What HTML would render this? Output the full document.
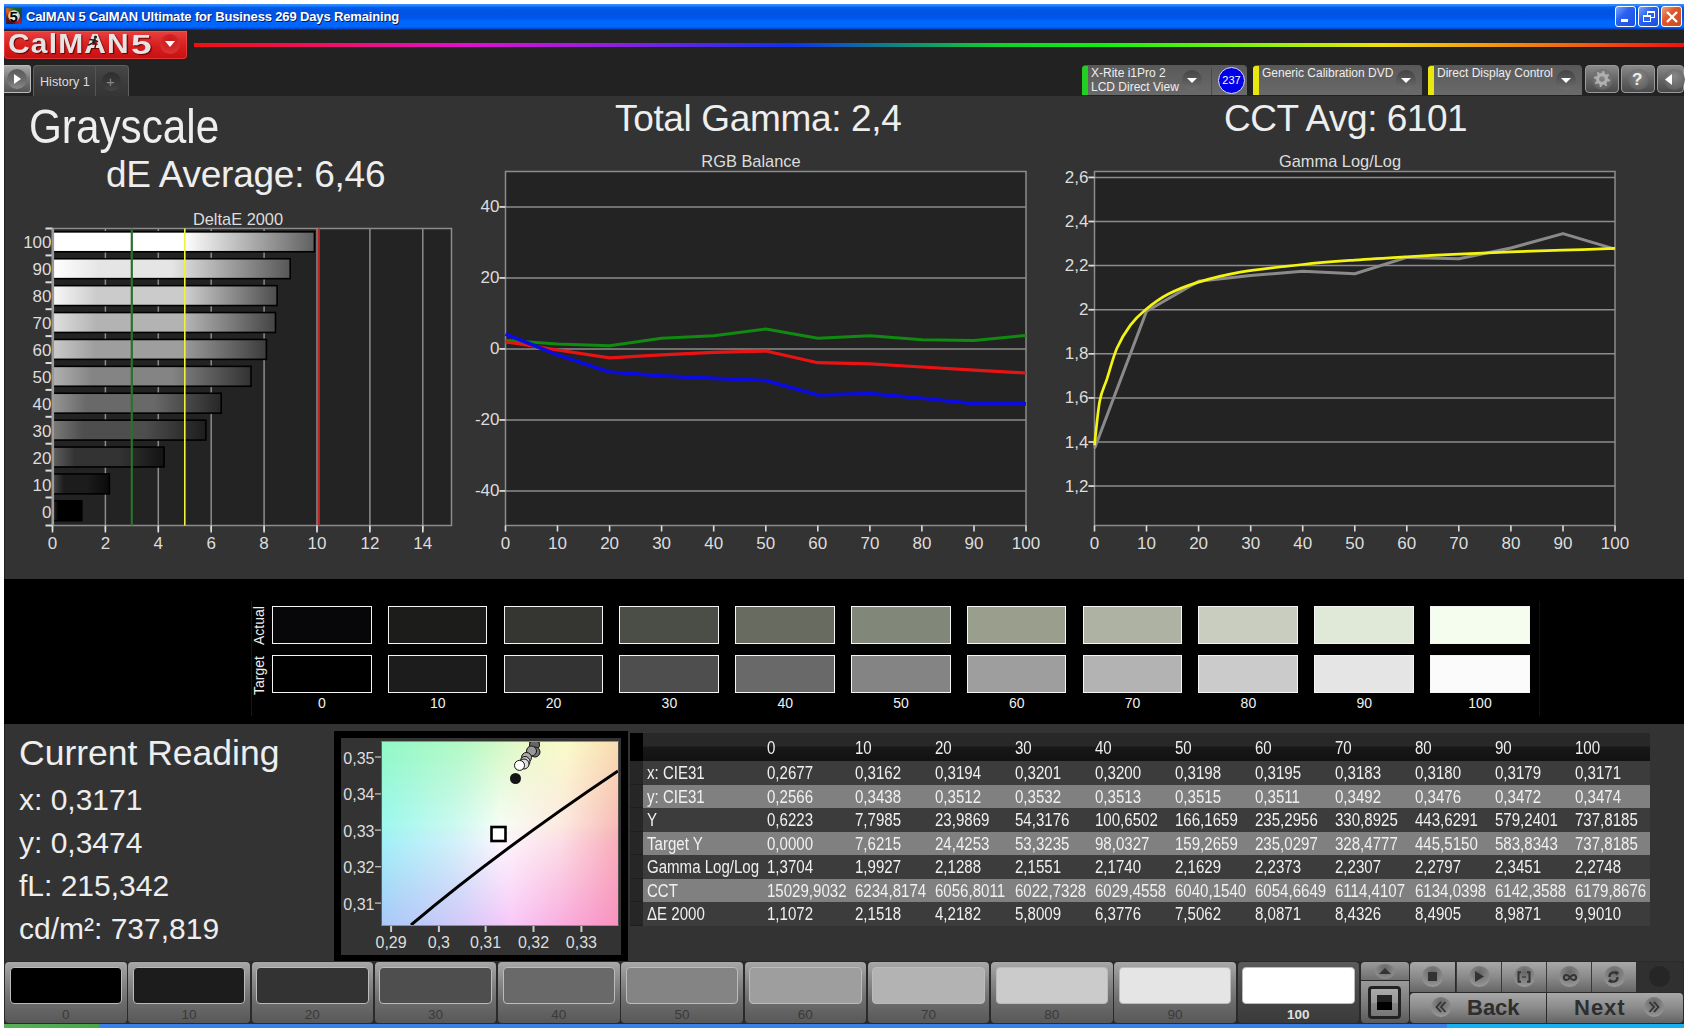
<!DOCTYPE html>
<html><head><meta charset="utf-8">
<style>
*{margin:0;padding:0;box-sizing:border-box}
html,body{width:1688px;height:1028px;overflow:hidden;background:#fff;font-family:"Liberation Sans", sans-serif}
.a{position:absolute}
.t{position:absolute;white-space:nowrap;line-height:1}
</style></head><body>

<div class="a" style="left:4px;top:4px;width:1680px;height:1020px;background:#222"></div>
<div class="a" style="left:4px;top:4px;width:1680px;height:26px;background:linear-gradient(#3a8af0 0px,#2a88ff 1.5px,#0062f2 3px,#0055e2 6px,#0052e4 10px,#0058f0 14px,#0068ff 18px,#0066fc 23px,#0048d8 24.5px,#182a50 26px)"></div>
<div class="a" style="left:5px;top:96px;width:1679px;height:483px;background:#333"></div>
<div class="a" style="left:4px;top:579px;width:1680px;height:145px;background:#000"></div>
<div class="a" style="left:5px;top:724px;width:1679px;height:238px;background:#333"></div>
<div class="a" style="left:4px;top:1024px;width:1680px;height:4px;background:linear-gradient(90deg,#5ab05a 0,#4aa54a 95px,#3a80e6 95px,#3a80e6 1443px,#18b0f0 1443px,#18b0f0 1680px)"></div>
<div class="a" style="left:6px;top:8px;width:16px;height:16px;background:conic-gradient(from 0deg,#1a6a1a,#2a3a2a 25%,#c01830 40%,#401010 55%,#602010 70%,#e06020 85%,#1a6a1a)"></div>
<div class="a" style="left:8px;top:10px;width:12px;height:12px;border-radius:50%;background:radial-gradient(#f0f0e0 40%,rgba(240,240,220,.6) 70%,transparent 72%)"></div>
<div class="t" style="left:9.5px;top:8.5px;font:bold 15px/16px 'Liberation Sans',sans-serif;color:#000">5</div>
<div class="t" style="left:26px;top:10px;font:bold 13px/14px 'Liberation Sans',sans-serif;color:#fff;text-shadow:1px 1px 0 #0a1a60;letter-spacing:-0.15px">CalMAN 5 CalMAN Ultimate for Business 269 Days Remaining</div>
<div style="position:absolute;top:6px;width:21px;height:21px;border:1px solid #fff;border-radius:3px;left:1615px;background:linear-gradient(135deg,#7aa4ff,#2a62f0 40%,#1d4fe0)"><div class="a" style="left:5px;top:12px;width:7px;height:3px;background:#fff"></div></div>
<div style="position:absolute;top:6px;width:21px;height:21px;border:1px solid #fff;border-radius:3px;left:1638px;background:linear-gradient(135deg,#7aa4ff,#2a62f0 40%,#1d4fe0)"><div class="a" style="left:8px;top:4px;width:8px;height:7px;border:1.5px solid #fff;border-top-width:2.5px"></div><div class="a" style="left:4px;top:8px;width:8px;height:7px;border:1.5px solid #fff;border-top-width:2.5px;background:#2a62f0"></div></div>
<div style="position:absolute;top:6px;width:21px;height:21px;border:1px solid #fff;border-radius:3px;left:1661px;background:linear-gradient(135deg,#f0a080,#e0582a 40%,#c84a20)"><svg class="a" style="left:3px;top:3px" width="14" height="14"><path d="M2 2L12 12M12 2L2 12" stroke="#fff" stroke-width="2.4"/></svg></div>
<div class="a" style="left:4px;top:31px;width:183px;height:28px;border-radius:0 0 4px 4px;background:linear-gradient(#e84040,#d82020 50%,#c81010);box-shadow:inset 0 0 0 1px rgba(255,120,120,.35)"></div>
<div class="t" style="left:8px;top:29px;font:bold 28px/30px 'Liberation Sans',sans-serif;color:#e4e4e4;text-shadow:1px 1px 1px #600;letter-spacing:1.1px;transform:scaleX(1.07);transform-origin:0 0">CalMAN</div>
<div class="t" style="left:131px;top:28.5px;font:bold 28.5px/30px 'Liberation Sans',sans-serif;color:#e4e4e4;text-shadow:1px 1px 1px #600;transform:scaleX(1.3);transform-origin:0 0">5</div>
<svg class="a" style="left:86px;top:35px" width="14" height="13"><circle cx="9.5" cy="2" r="1.6" fill="#222"/><path d="M8.5 4L6 8.5L2.5 10M7.5 6.5L10 9L9 12.5M7.5 5L11.5 6.5M7 5L4 4.5" fill="none" stroke="#222" stroke-width="1.5" stroke-linecap="round"/></svg>
<div class="a" style="left:160px;top:34px;width:20px;height:20px;border-radius:50%;background:radial-gradient(circle at 50% 30%,#c81818,#d83030 70%,#e04040)"></div>
<svg class="a" style="left:163px;top:40px" width="14" height="8"><path d="M2 1L12 1L7 7Z" fill="#fff"/></svg>
<div class="a" style="left:194px;top:43px;width:1490px;height:4px;background:linear-gradient(90deg,#f01010 0%,#f01060 8.5%,#e010d0 18.5%,#9020e0 28%,#1030f0 40%,#107890 46%,#10d030 54%,#10f010 61%,#a0f010 73%,#f0e010 79.6%,#f0a010 86.3%,#f06010 93%,#f01010 100%)"></div>
<div class="a" style="left:4px;top:65px;width:27px;height:28px;border-radius:0 3px 3px 0;border:1px solid #bbb;border-left:none;background:linear-gradient(#aaa,#777 50%,#555)"></div>
<div class="a" style="left:7px;top:69px;width:20px;height:20px;border-radius:50%;background:linear-gradient(#5a5a5a,#6e6e6e 60%,#8a8a8a)"></div>
<svg class="a" style="left:13px;top:73px" width="9" height="12"><path d="M1 1L8 6L1 11Z" fill="#fff"/></svg>
<div class="a" style="left:33px;top:65px;width:96px;height:31px;border-radius:4px 4px 0 0;border:1px solid #5e5e5e;border-bottom:none;background:linear-gradient(#474747,#3a3a3a 60%,#353535)"></div>
<div class="a" style="left:95px;top:66px;width:1px;height:30px;background:#555"></div>
<div class="t" style="left:40px;top:75px;font:12.6px/14px 'Liberation Sans',sans-serif;color:#ddd">History 1</div>
<div class="a" style="left:102px;top:72px;width:19px;height:19px;border-radius:50%;background:linear-gradient(#2e2e2e,#3a3a3a 70%,#454545)"></div>
<div class="t" style="left:106px;top:73px;font:15px/17px 'Liberation Sans',sans-serif;color:#8a8a8a">+</div>
<div class="a" style="left:1082px;top:65px;width:165px;height:30px;border-radius:4px 4px 0 0;background:linear-gradient(#595959,#6a6a6a)"></div><div class="a" style="left:1082px;top:66px;width:6px;height:29px;border-radius:3px 0 0 0;background:#22d022"></div><div class="t" style="left:1091px;top:67px;font:12px/13px 'Liberation Sans',sans-serif;color:#eee">X-Rite i1Pro 2</div><div class="t" style="left:1091px;top:81px;font:12px/13px 'Liberation Sans',sans-serif;color:#eee">LCD Direct View</div><div class="a" style="left:1182px;top:70px;width:20px;height:20px;border-radius:50%;background:linear-gradient(#444,#5a5a5a 55%,#6e6e6e)"></div><svg class="a" style="left:1186px;top:77px" width="12" height="7"><path d="M1 1L11 1L6 6Z" fill="#fff"/></svg>
<div class="a" style="left:1211px;top:68px;width:1px;height:27px;background:#4a4a4a"></div>
<div class="a" style="left:1218px;top:67px;width:27px;height:27px;border-radius:50%;background:#0000e8;border:1px solid #ddf"></div>
<div class="t" style="left:1218px;top:75px;width:27px;text-align:center;font:11px/11px 'Liberation Sans',sans-serif;color:#fff">237</div>
<div class="a" style="left:1253px;top:65px;width:169px;height:30px;border-radius:4px 4px 0 0;background:linear-gradient(#595959,#6a6a6a)"></div><div class="a" style="left:1253px;top:66px;width:6px;height:29px;border-radius:3px 0 0 0;background:#e8e810"></div><div class="t" style="left:1262px;top:67px;font:12px/13px 'Liberation Sans',sans-serif;color:#eee">Generic Calibration DVD</div><div class="a" style="left:1396px;top:70px;width:20px;height:20px;border-radius:50%;background:linear-gradient(#444,#5a5a5a 55%,#6e6e6e)"></div><svg class="a" style="left:1400px;top:77px" width="12" height="7"><path d="M1 1L11 1L6 6Z" fill="#fff"/></svg>
<div class="a" style="left:1428px;top:65px;width:154px;height:30px;border-radius:4px 4px 0 0;background:linear-gradient(#595959,#6a6a6a)"></div><div class="a" style="left:1428px;top:66px;width:6px;height:29px;border-radius:3px 0 0 0;background:#e8e810"></div><div class="t" style="left:1437px;top:67px;font:12px/13px 'Liberation Sans',sans-serif;color:#eee">Direct Display Control</div><div class="a" style="left:1556px;top:70px;width:20px;height:20px;border-radius:50%;background:linear-gradient(#444,#5a5a5a 55%,#6e6e6e)"></div><svg class="a" style="left:1560px;top:77px" width="12" height="7"><path d="M1 1L11 1L6 6Z" fill="#fff"/></svg>
<div class="a" style="left:1585px;top:65px;width:34px;height:28px;border-radius:4px;border:1px solid #9a9a9a;background:linear-gradient(#8a8a8a,#666 50%,#4a4a4a)"></div>
<div class="a" style="left:1592px;top:69px;width:21px;height:21px;border-radius:50%;background:radial-gradient(circle at 50% 35%,#888,#555)"></div>
<div class="a" style="left:1621px;top:65px;width:34px;height:28px;border-radius:4px;border:1px solid #9a9a9a;background:linear-gradient(#8a8a8a,#666 50%,#4a4a4a)"></div>
<div class="a" style="left:1628px;top:69px;width:21px;height:21px;border-radius:50%;background:radial-gradient(circle at 50% 35%,#888,#555)"></div>
<div class="a" style="left:1657px;top:65px;width:27px;height:28px;border-radius:4px;border:1px solid #9a9a9a;background:linear-gradient(#8a8a8a,#666 50%,#4a4a4a)"></div>
<div class="a" style="left:1664px;top:69px;width:21px;height:21px;border-radius:50%;background:radial-gradient(circle at 50% 35%,#888,#555)"></div>
<svg class="a" style="left:1592px;top:69px" width="20" height="20"><path d="M16.00,10.00 L18.16,10.77 L17.84,12.41 L15.54,12.30 L14.24,14.24 L15.23,16.32 L13.84,17.25 L12.30,15.54 L10.00,16.00 L9.23,18.16 L7.59,17.84 L7.70,15.54 L5.76,14.24 L3.68,15.23 L2.75,13.84 L4.46,12.30 L4.00,10.00 L1.84,9.23 L2.16,7.59 L4.46,7.70 L5.76,5.76 L4.77,3.68 L6.16,2.75 L7.70,4.46 L10.00,4.00 L10.77,1.84 L12.41,2.16 L12.30,4.46 L14.24,5.76 L16.32,4.77 L17.25,6.16 L15.54,7.70Z M12.8,10 A2.8,2.8 0 1,0 7.2,10 A2.8,2.8 0 1,0 12.8,10Z" fill="#b0b0b0" fill-rule="evenodd"/></svg>
<div class="t" style="left:1632px;top:71px;font:bold 17px/17px 'Liberation Sans',sans-serif;color:#eee">?</div>
<svg class="a" style="left:1664px;top:73px" width="10" height="13"><path d="M8 1L1 6.5L8 12Z" fill="#fff"/></svg>
<svg class="a" style="left:0;top:0;font-family:'Liberation Sans',sans-serif" width="1688" height="580">
<defs><linearGradient id="bg10" x1="0" x2="1" y1="0" y2="0"><stop offset="0" stop-color="#ffffff"/><stop offset="0.2" stop-color="#ffffff"/><stop offset="0.5" stop-color="#ffffff"/><stop offset="1" stop-color="#606060"/></linearGradient><linearGradient id="bg9" x1="0" x2="1" y1="0" y2="0"><stop offset="0" stop-color="#ffffff"/><stop offset="0.2" stop-color="#e5e5e5"/><stop offset="0.5" stop-color="#e5e5e5"/><stop offset="1" stop-color="#575757"/></linearGradient><linearGradient id="bg8" x1="0" x2="1" y1="0" y2="0"><stop offset="0" stop-color="#f8f8f8"/><stop offset="0.2" stop-color="#cbcbcb"/><stop offset="0.6" stop-color="#cbcbcb"/><stop offset="1" stop-color="#4d4d4d"/></linearGradient><linearGradient id="bg7" x1="0" x2="1" y1="0" y2="0"><stop offset="0" stop-color="#e0e0e0"/><stop offset="0.2" stop-color="#b3b3b3"/><stop offset="0.6" stop-color="#b3b3b3"/><stop offset="1" stop-color="#444444"/></linearGradient><linearGradient id="bg6" x1="0" x2="1" y1="0" y2="0"><stop offset="0" stop-color="#cbcbcb"/><stop offset="0.2" stop-color="#9e9e9e"/><stop offset="0.6" stop-color="#9e9e9e"/><stop offset="1" stop-color="#3c3c3c"/></linearGradient><linearGradient id="bg5" x1="0" x2="1" y1="0" y2="0"><stop offset="0" stop-color="#b1b1b1"/><stop offset="0.2" stop-color="#848484"/><stop offset="0.6" stop-color="#848484"/><stop offset="1" stop-color="#323232"/></linearGradient><linearGradient id="bg4" x1="0" x2="1" y1="0" y2="0"><stop offset="0" stop-color="#969696"/><stop offset="0.2" stop-color="#696969"/><stop offset="0.6" stop-color="#696969"/><stop offset="1" stop-color="#272727"/></linearGradient><linearGradient id="bg3" x1="0" x2="1" y1="0" y2="0"><stop offset="0" stop-color="#7b7b7b"/><stop offset="0.2" stop-color="#4e4e4e"/><stop offset="0.6" stop-color="#4e4e4e"/><stop offset="1" stop-color="#1d1d1d"/></linearGradient><linearGradient id="bg2" x1="0" x2="1" y1="0" y2="0"><stop offset="0" stop-color="#606060"/><stop offset="0.2" stop-color="#333333"/><stop offset="0.6" stop-color="#333333"/><stop offset="1" stop-color="#131313"/></linearGradient><linearGradient id="bg1" x1="0" x2="1" y1="0" y2="0"><stop offset="0" stop-color="#494949"/><stop offset="0.2" stop-color="#1c1c1c"/><stop offset="0.6" stop-color="#1c1c1c"/><stop offset="1" stop-color="#0a0a0a"/></linearGradient><linearGradient id="bg0" x1="0" x2="1" y1="0" y2="0"><stop offset="0" stop-color="#2d2d2d"/><stop offset="0.2" stop-color="#000000"/><stop offset="0.6" stop-color="#000000"/><stop offset="1" stop-color="#000000"/></linearGradient></defs><rect x="52.5" y="228.5" width="399.0" height="297.0" fill="#232323" stroke="#8c8c8c" stroke-width="1.5"/><line x1="105.4" y1="228.5" x2="105.4" y2="530.5" stroke="#8c8c8c" stroke-width="1.5"/><line x1="158.3" y1="228.5" x2="158.3" y2="530.5" stroke="#8c8c8c" stroke-width="1.5"/><line x1="211.2" y1="228.5" x2="211.2" y2="530.5" stroke="#8c8c8c" stroke-width="1.5"/><line x1="264.1" y1="228.5" x2="264.1" y2="530.5" stroke="#8c8c8c" stroke-width="1.5"/><line x1="317.0" y1="228.5" x2="317.0" y2="530.5" stroke="#8c8c8c" stroke-width="1.5"/><line x1="369.9" y1="228.5" x2="369.9" y2="530.5" stroke="#8c8c8c" stroke-width="1.5"/><line x1="422.8" y1="228.5" x2="422.8" y2="530.5" stroke="#8c8c8c" stroke-width="1.5"/><line x1="52.5" y1="525.5" x2="52.5" y2="530.5" stroke="#8c8c8c" stroke-width="1.5"/><rect x="52.5" y="231.85" width="261.9" height="19.9" fill="url(#bg10)" stroke="#000" stroke-width="1.6"/><line x1="45.5" y1="228.5" x2="52.5" y2="228.5" stroke="#ddd" stroke-width="2"/><text x="51.5" y="248.4" font-size="17" fill="#ddd" text-anchor="end" >100</text><rect x="52.5" y="258.75" width="237.7" height="19.9" fill="url(#bg9)" stroke="#000" stroke-width="1.6"/><line x1="45.5" y1="255.4" x2="52.5" y2="255.4" stroke="#ddd" stroke-width="2"/><text x="51.5" y="275.4" font-size="17" fill="#ddd" text-anchor="end" >90</text><rect x="52.5" y="285.65" width="224.6" height="19.9" fill="url(#bg8)" stroke="#000" stroke-width="1.6"/><line x1="45.5" y1="282.3" x2="52.5" y2="282.3" stroke="#ddd" stroke-width="2"/><text x="51.5" y="302.2" font-size="17" fill="#ddd" text-anchor="end" >80</text><rect x="52.5" y="312.55" width="223.0" height="19.9" fill="url(#bg7)" stroke="#000" stroke-width="1.6"/><line x1="45.5" y1="309.2" x2="52.5" y2="309.2" stroke="#ddd" stroke-width="2"/><text x="51.5" y="329.1" font-size="17" fill="#ddd" text-anchor="end" >70</text><rect x="52.5" y="339.45" width="213.9" height="19.9" fill="url(#bg6)" stroke="#000" stroke-width="1.6"/><line x1="45.5" y1="336.1" x2="52.5" y2="336.1" stroke="#ddd" stroke-width="2"/><text x="51.5" y="356.1" font-size="17" fill="#ddd" text-anchor="end" >60</text><rect x="52.5" y="366.35" width="198.5" height="19.9" fill="url(#bg5)" stroke="#000" stroke-width="1.6"/><line x1="45.5" y1="363.0" x2="52.5" y2="363.0" stroke="#ddd" stroke-width="2"/><text x="51.5" y="382.9" font-size="17" fill="#ddd" text-anchor="end" >50</text><rect x="52.5" y="393.25" width="168.7" height="19.9" fill="url(#bg4)" stroke="#000" stroke-width="1.6"/><line x1="45.5" y1="389.9" x2="52.5" y2="389.9" stroke="#ddd" stroke-width="2"/><text x="51.5" y="409.8" font-size="17" fill="#ddd" text-anchor="end" >40</text><rect x="52.5" y="420.15" width="153.4" height="19.9" fill="url(#bg3)" stroke="#000" stroke-width="1.6"/><line x1="45.5" y1="416.8" x2="52.5" y2="416.8" stroke="#ddd" stroke-width="2"/><text x="51.5" y="436.7" font-size="17" fill="#ddd" text-anchor="end" >30</text><rect x="52.5" y="447.05" width="111.6" height="19.9" fill="url(#bg2)" stroke="#000" stroke-width="1.6"/><line x1="45.5" y1="443.7" x2="52.5" y2="443.7" stroke="#ddd" stroke-width="2"/><text x="51.5" y="463.6" font-size="17" fill="#ddd" text-anchor="end" >20</text><rect x="52.5" y="473.95" width="56.9" height="19.9" fill="url(#bg1)" stroke="#000" stroke-width="1.6"/><line x1="45.5" y1="470.6" x2="52.5" y2="470.6" stroke="#ddd" stroke-width="2"/><text x="51.5" y="490.6" font-size="17" fill="#ddd" text-anchor="end" >10</text><rect x="52.5" y="500.85" width="29.3" height="19.9" fill="url(#bg0)" stroke="#000" stroke-width="1.6"/><line x1="45.5" y1="497.5" x2="52.5" y2="497.5" stroke="#ddd" stroke-width="2"/><text x="51.5" y="517.5" font-size="17" fill="#ddd" text-anchor="end" >0</text><line x1="45.5" y1="525.5" x2="52.5" y2="525.5" stroke="#ddd" stroke-width="2"/><line x1="52.8" y1="228.5" x2="52.8" y2="525.5" stroke="#9a9a9a" stroke-width="2.6"/><line x1="131.8" y1="228.5" x2="131.8" y2="525.5" stroke="#2e6e2e" stroke-width="2.2"/><line x1="184.8" y1="228.5" x2="184.8" y2="525.5" stroke="#f0f040" stroke-width="1.6"/><line x1="319.0" y1="228.5" x2="319.0" y2="525.5" stroke="#d02020" stroke-width="1.8"/><line x1="52.5" y1="525.5" x2="52.5" y2="532.5" stroke="#e0e0e0" stroke-width="1.6"/><text x="52.5" y="549.0" font-size="17" fill="#ddd" text-anchor="middle" >0</text><line x1="105.4" y1="525.5" x2="105.4" y2="532.5" stroke="#e0e0e0" stroke-width="1.6"/><text x="105.4" y="549.0" font-size="17" fill="#ddd" text-anchor="middle" >2</text><line x1="158.3" y1="525.5" x2="158.3" y2="532.5" stroke="#e0e0e0" stroke-width="1.6"/><text x="158.3" y="549.0" font-size="17" fill="#ddd" text-anchor="middle" >4</text><line x1="211.2" y1="525.5" x2="211.2" y2="532.5" stroke="#e0e0e0" stroke-width="1.6"/><text x="211.2" y="549.0" font-size="17" fill="#ddd" text-anchor="middle" >6</text><line x1="264.1" y1="525.5" x2="264.1" y2="532.5" stroke="#e0e0e0" stroke-width="1.6"/><text x="264.1" y="549.0" font-size="17" fill="#ddd" text-anchor="middle" >8</text><line x1="317.0" y1="525.5" x2="317.0" y2="532.5" stroke="#e0e0e0" stroke-width="1.6"/><text x="317.0" y="549.0" font-size="17" fill="#ddd" text-anchor="middle" >10</text><line x1="369.9" y1="525.5" x2="369.9" y2="532.5" stroke="#e0e0e0" stroke-width="1.6"/><text x="369.9" y="549.0" font-size="17" fill="#ddd" text-anchor="middle" >12</text><line x1="422.8" y1="525.5" x2="422.8" y2="532.5" stroke="#e0e0e0" stroke-width="1.6"/><text x="422.8" y="549.0" font-size="17" fill="#ddd" text-anchor="middle" >14</text><text x="238" y="225" font-size="16.4" fill="#ddd" text-anchor="middle" >DeltaE 2000</text>
<rect x="505.5" y="171.5" width="520.5" height="354.0" fill="#232323" stroke="#8c8c8c" stroke-width="1.5"/><line x1="499.5" y1="206.9" x2="1026" y2="206.9" stroke="#8c8c8c" stroke-width="1.5"/><line x1="499.5" y1="206.9" x2="505.5" y2="206.9" stroke="#ddd" stroke-width="1.6"/><text x="499.5" y="212.4" font-size="17" fill="#ddd" text-anchor="end" >40</text><line x1="499.5" y1="277.9" x2="1026" y2="277.9" stroke="#8c8c8c" stroke-width="1.5"/><line x1="499.5" y1="277.9" x2="505.5" y2="277.9" stroke="#ddd" stroke-width="1.6"/><text x="499.5" y="283.4" font-size="17" fill="#ddd" text-anchor="end" >20</text><line x1="499.5" y1="348.9" x2="1026" y2="348.9" stroke="#8c8c8c" stroke-width="1.5"/><line x1="499.5" y1="348.9" x2="505.5" y2="348.9" stroke="#ddd" stroke-width="1.6"/><text x="499.5" y="354.4" font-size="17" fill="#ddd" text-anchor="end" >0</text><line x1="499.5" y1="419.9" x2="1026" y2="419.9" stroke="#8c8c8c" stroke-width="1.5"/><line x1="499.5" y1="419.9" x2="505.5" y2="419.9" stroke="#ddd" stroke-width="1.6"/><text x="499.5" y="425.4" font-size="17" fill="#ddd" text-anchor="end" >-20</text><line x1="499.5" y1="490.9" x2="1026" y2="490.9" stroke="#8c8c8c" stroke-width="1.5"/><line x1="499.5" y1="490.9" x2="505.5" y2="490.9" stroke="#ddd" stroke-width="1.6"/><text x="499.5" y="496.4" font-size="17" fill="#ddd" text-anchor="end" >-40</text><line x1="505.5" y1="525.5" x2="505.5" y2="531.5" stroke="#ddd" stroke-width="1.6"/><text x="505.5" y="549.0" font-size="17" fill="#ddd" text-anchor="middle" >0</text><line x1="557.5" y1="525.5" x2="557.5" y2="531.5" stroke="#ddd" stroke-width="1.6"/><text x="557.5" y="549.0" font-size="17" fill="#ddd" text-anchor="middle" >10</text><line x1="609.6" y1="525.5" x2="609.6" y2="531.5" stroke="#ddd" stroke-width="1.6"/><text x="609.6" y="549.0" font-size="17" fill="#ddd" text-anchor="middle" >20</text><line x1="661.6" y1="525.5" x2="661.6" y2="531.5" stroke="#ddd" stroke-width="1.6"/><text x="661.6" y="549.0" font-size="17" fill="#ddd" text-anchor="middle" >30</text><line x1="713.7" y1="525.5" x2="713.7" y2="531.5" stroke="#ddd" stroke-width="1.6"/><text x="713.7" y="549.0" font-size="17" fill="#ddd" text-anchor="middle" >40</text><line x1="765.8" y1="525.5" x2="765.8" y2="531.5" stroke="#ddd" stroke-width="1.6"/><text x="765.8" y="549.0" font-size="17" fill="#ddd" text-anchor="middle" >50</text><line x1="817.8" y1="525.5" x2="817.8" y2="531.5" stroke="#ddd" stroke-width="1.6"/><text x="817.8" y="549.0" font-size="17" fill="#ddd" text-anchor="middle" >60</text><line x1="869.9" y1="525.5" x2="869.9" y2="531.5" stroke="#ddd" stroke-width="1.6"/><text x="869.9" y="549.0" font-size="17" fill="#ddd" text-anchor="middle" >70</text><line x1="921.9" y1="525.5" x2="921.9" y2="531.5" stroke="#ddd" stroke-width="1.6"/><text x="921.9" y="549.0" font-size="17" fill="#ddd" text-anchor="middle" >80</text><line x1="974.0" y1="525.5" x2="974.0" y2="531.5" stroke="#ddd" stroke-width="1.6"/><text x="974.0" y="549.0" font-size="17" fill="#ddd" text-anchor="middle" >90</text><line x1="1026.0" y1="525.5" x2="1026.0" y2="531.5" stroke="#ddd" stroke-width="1.6"/><text x="1026.0" y="549.0" font-size="17" fill="#ddd" text-anchor="middle" >100</text><polyline points="505.5,340.4 557.5,343.9 609.6,345.7 661.6,338.2 713.7,335.8 765.8,329.0 817.8,338.2 869.9,335.8 921.9,339.7 974.0,340.4 1026.0,335.4" fill="none" stroke="#108a10" stroke-width="3" stroke-linejoin="round"/><polyline points="505.5,341.8 557.5,350.0 609.6,357.8 661.6,354.9 713.7,352.4 765.8,351.0 817.8,362.7 869.9,363.8 921.9,367.0 974.0,370.2 1026.0,373.0" fill="none" stroke="#e81414" stroke-width="3.2" stroke-linejoin="round"/><polyline points="505.5,334.0 557.5,354.9 609.6,372.0 661.6,375.9 713.7,378.4 765.8,380.5 817.8,395.0 869.9,393.6 921.9,398.2 974.0,403.6 1026.0,403.9" fill="none" stroke="#0c0ce0" stroke-width="3.6" stroke-linejoin="round"/><text x="751" y="167" font-size="16.4" fill="#ddd" text-anchor="middle" >RGB Balance</text>
<rect x="1094.5" y="171.5" width="520.5" height="354.0" fill="#232323" stroke="#8c8c8c" stroke-width="1.5"/><line x1="1088.5" y1="177.4" x2="1615" y2="177.4" stroke="#8c8c8c" stroke-width="1.5"/><line x1="1088.5" y1="177.4" x2="1094.5" y2="177.4" stroke="#ddd" stroke-width="1.6"/><text x="1088.5" y="182.9" font-size="17" fill="#ddd" text-anchor="end" >2,6</text><line x1="1088.5" y1="221.5" x2="1615" y2="221.5" stroke="#8c8c8c" stroke-width="1.5"/><line x1="1088.5" y1="221.5" x2="1094.5" y2="221.5" stroke="#ddd" stroke-width="1.6"/><text x="1088.5" y="227.0" font-size="17" fill="#ddd" text-anchor="end" >2,4</text><line x1="1088.5" y1="265.6" x2="1615" y2="265.6" stroke="#8c8c8c" stroke-width="1.5"/><line x1="1088.5" y1="265.6" x2="1094.5" y2="265.6" stroke="#ddd" stroke-width="1.6"/><text x="1088.5" y="271.1" font-size="17" fill="#ddd" text-anchor="end" >2,2</text><line x1="1088.5" y1="309.7" x2="1615" y2="309.7" stroke="#8c8c8c" stroke-width="1.5"/><line x1="1088.5" y1="309.7" x2="1094.5" y2="309.7" stroke="#ddd" stroke-width="1.6"/><text x="1088.5" y="315.2" font-size="17" fill="#ddd" text-anchor="end" >2</text><line x1="1088.5" y1="353.8" x2="1615" y2="353.8" stroke="#8c8c8c" stroke-width="1.5"/><line x1="1088.5" y1="353.8" x2="1094.5" y2="353.8" stroke="#ddd" stroke-width="1.6"/><text x="1088.5" y="359.3" font-size="17" fill="#ddd" text-anchor="end" >1,8</text><line x1="1088.5" y1="397.9" x2="1615" y2="397.9" stroke="#8c8c8c" stroke-width="1.5"/><line x1="1088.5" y1="397.9" x2="1094.5" y2="397.9" stroke="#ddd" stroke-width="1.6"/><text x="1088.5" y="403.4" font-size="17" fill="#ddd" text-anchor="end" >1,6</text><line x1="1088.5" y1="442.0" x2="1615" y2="442.0" stroke="#8c8c8c" stroke-width="1.5"/><line x1="1088.5" y1="442.0" x2="1094.5" y2="442.0" stroke="#ddd" stroke-width="1.6"/><text x="1088.5" y="447.5" font-size="17" fill="#ddd" text-anchor="end" >1,4</text><line x1="1088.5" y1="486.1" x2="1615" y2="486.1" stroke="#8c8c8c" stroke-width="1.5"/><line x1="1088.5" y1="486.1" x2="1094.5" y2="486.1" stroke="#ddd" stroke-width="1.6"/><text x="1088.5" y="491.6" font-size="17" fill="#ddd" text-anchor="end" >1,2</text><line x1="1094.5" y1="525.5" x2="1094.5" y2="531.5" stroke="#ddd" stroke-width="1.6"/><text x="1094.5" y="549.0" font-size="17" fill="#ddd" text-anchor="middle" >0</text><line x1="1146.5" y1="525.5" x2="1146.5" y2="531.5" stroke="#ddd" stroke-width="1.6"/><text x="1146.5" y="549.0" font-size="17" fill="#ddd" text-anchor="middle" >10</text><line x1="1198.6" y1="525.5" x2="1198.6" y2="531.5" stroke="#ddd" stroke-width="1.6"/><text x="1198.6" y="549.0" font-size="17" fill="#ddd" text-anchor="middle" >20</text><line x1="1250.7" y1="525.5" x2="1250.7" y2="531.5" stroke="#ddd" stroke-width="1.6"/><text x="1250.7" y="549.0" font-size="17" fill="#ddd" text-anchor="middle" >30</text><line x1="1302.7" y1="525.5" x2="1302.7" y2="531.5" stroke="#ddd" stroke-width="1.6"/><text x="1302.7" y="549.0" font-size="17" fill="#ddd" text-anchor="middle" >40</text><line x1="1354.8" y1="525.5" x2="1354.8" y2="531.5" stroke="#ddd" stroke-width="1.6"/><text x="1354.8" y="549.0" font-size="17" fill="#ddd" text-anchor="middle" >50</text><line x1="1406.8" y1="525.5" x2="1406.8" y2="531.5" stroke="#ddd" stroke-width="1.6"/><text x="1406.8" y="549.0" font-size="17" fill="#ddd" text-anchor="middle" >60</text><line x1="1458.8" y1="525.5" x2="1458.8" y2="531.5" stroke="#ddd" stroke-width="1.6"/><text x="1458.8" y="549.0" font-size="17" fill="#ddd" text-anchor="middle" >70</text><line x1="1510.9" y1="525.5" x2="1510.9" y2="531.5" stroke="#ddd" stroke-width="1.6"/><text x="1510.9" y="549.0" font-size="17" fill="#ddd" text-anchor="middle" >80</text><line x1="1563.0" y1="525.5" x2="1563.0" y2="531.5" stroke="#ddd" stroke-width="1.6"/><text x="1563.0" y="549.0" font-size="17" fill="#ddd" text-anchor="middle" >90</text><line x1="1615.0" y1="525.5" x2="1615.0" y2="531.5" stroke="#ddd" stroke-width="1.6"/><text x="1615.0" y="549.0" font-size="17" fill="#ddd" text-anchor="middle" >100</text><polyline points="1094.5,448.5 1146.5,311.3 1198.6,281.3 1250.7,275.5 1302.7,271.3 1354.8,273.8 1406.8,257.4 1458.8,258.8 1510.9,248.0 1563.0,233.6 1615.0,249.1" fill="none" stroke="#8a8a8a" stroke-width="3" stroke-linejoin="round"/><path d="M1094.5,445.3 C1095.4,438.0 1097.6,412.3 1099.7,401.2 C1101.8,390.1 1104.1,387.8 1107.0,378.9 C1109.9,370.1 1113.0,357.3 1116.9,348.3 C1120.8,339.3 1125.6,331.6 1130.4,325.1 C1135.2,318.7 1139.3,314.8 1145.5,309.7 C1151.8,304.6 1159.0,298.9 1167.9,294.3 C1176.7,289.7 1186.5,285.8 1198.6,282.1 C1210.7,278.5 1222.9,275.2 1240.2,272.2 C1257.6,269.3 1283.6,266.5 1302.7,264.5 C1321.8,262.5 1337.4,261.4 1354.8,260.1 C1372.1,258.8 1389.5,257.8 1406.8,256.8 C1424.1,255.8 1441.5,254.9 1458.8,254.1 C1476.2,253.3 1493.6,252.6 1510.9,251.9 C1528.2,251.3 1545.6,250.8 1563.0,250.2 C1580.3,249.6 1606.3,248.7 1615.0,248.4" fill="none" stroke="#f4f414" stroke-width="2.7" stroke-linejoin="round"/><text x="1340" y="167" font-size="16.4" fill="#ddd" text-anchor="middle" >Gamma Log/Log</text>
</svg>
<div class="t" style="left:29px;top:102px;font:48px/50px 'Liberation Sans',sans-serif;color:#eee;transform:scaleX(0.88);transform-origin:0 0">Grayscale</div>
<div class="t" style="left:106px;top:155px;font:37px/40px 'Liberation Sans',sans-serif;color:#eee;letter-spacing:-0.25px">dE Average: 6,46</div>
<div class="t" style="left:615px;top:99px;font:37px/40px 'Liberation Sans',sans-serif;color:#eee;letter-spacing:-0.35px">Total Gamma: 2,4</div>
<div class="t" style="left:1224px;top:99px;font:37px/40px 'Liberation Sans',sans-serif;color:#eee;letter-spacing:-0.5px">CCT Avg: 6101</div>
<div class="a" style="left:251px;top:601px;width:1px;height:115px;background:#161616"></div>
<div class="a" style="left:1539px;top:601px;width:1px;height:115px;background:#121212"></div>
<div class="a" style="left:272.0px;top:606px;width:99.6px;height:38px;border:1.6px solid #f4f4f4;background:#070709"></div>
<div class="a" style="left:272.0px;top:655px;width:99.6px;height:38px;border:1.6px solid #f4f4f4;background:#000000"></div>
<div class="t" style="left:272.0px;top:696px;width:100px;text-align:center;font:14px/14px 'Liberation Sans',sans-serif;color:#f0f0f0">0</div>
<div class="a" style="left:387.8px;top:606px;width:99.6px;height:38px;border:1.6px solid #f4f4f4;background:#1c1c1a"></div>
<div class="a" style="left:387.8px;top:655px;width:99.6px;height:38px;border:1.6px solid #f4f4f4;background:#1c1c1c"></div>
<div class="t" style="left:387.8px;top:696px;width:100px;text-align:center;font:14px/14px 'Liberation Sans',sans-serif;color:#f0f0f0">10</div>
<div class="a" style="left:503.6px;top:606px;width:99.6px;height:38px;border:1.6px solid #f4f4f4;background:#353632"></div>
<div class="a" style="left:503.6px;top:655px;width:99.6px;height:38px;border:1.6px solid #f4f4f4;background:#333333"></div>
<div class="t" style="left:503.6px;top:696px;width:100px;text-align:center;font:14px/14px 'Liberation Sans',sans-serif;color:#f0f0f0">20</div>
<div class="a" style="left:619.4px;top:606px;width:99.6px;height:38px;border:1.6px solid #f4f4f4;background:#4b4e46"></div>
<div class="a" style="left:619.4px;top:655px;width:99.6px;height:38px;border:1.6px solid #f4f4f4;background:#4e4e4e"></div>
<div class="t" style="left:619.4px;top:696px;width:100px;text-align:center;font:14px/14px 'Liberation Sans',sans-serif;color:#f0f0f0">30</div>
<div class="a" style="left:735.2px;top:606px;width:99.6px;height:38px;border:1.6px solid #f4f4f4;background:#686b60"></div>
<div class="a" style="left:735.2px;top:655px;width:99.6px;height:38px;border:1.6px solid #f4f4f4;background:#696969"></div>
<div class="t" style="left:735.2px;top:696px;width:100px;text-align:center;font:14px/14px 'Liberation Sans',sans-serif;color:#f0f0f0">40</div>
<div class="a" style="left:851.0px;top:606px;width:99.6px;height:38px;border:1.6px solid #f4f4f4;background:#818779"></div>
<div class="a" style="left:851.0px;top:655px;width:99.6px;height:38px;border:1.6px solid #f4f4f4;background:#848484"></div>
<div class="t" style="left:851.0px;top:696px;width:100px;text-align:center;font:14px/14px 'Liberation Sans',sans-serif;color:#f0f0f0">50</div>
<div class="a" style="left:966.8px;top:606px;width:99.6px;height:38px;border:1.6px solid #f4f4f4;background:#999e8d"></div>
<div class="a" style="left:966.8px;top:655px;width:99.6px;height:38px;border:1.6px solid #f4f4f4;background:#9e9e9e"></div>
<div class="t" style="left:966.8px;top:696px;width:100px;text-align:center;font:14px/14px 'Liberation Sans',sans-serif;color:#f0f0f0">60</div>
<div class="a" style="left:1082.6px;top:606px;width:99.6px;height:38px;border:1.6px solid #f4f4f4;background:#adb2a3"></div>
<div class="a" style="left:1082.6px;top:655px;width:99.6px;height:38px;border:1.6px solid #f4f4f4;background:#b3b3b3"></div>
<div class="t" style="left:1082.6px;top:696px;width:100px;text-align:center;font:14px/14px 'Liberation Sans',sans-serif;color:#f0f0f0">70</div>
<div class="a" style="left:1198.4px;top:606px;width:99.6px;height:38px;border:1.6px solid #f4f4f4;background:#c8cdbf"></div>
<div class="a" style="left:1198.4px;top:655px;width:99.6px;height:38px;border:1.6px solid #f4f4f4;background:#cbcbcb"></div>
<div class="t" style="left:1198.4px;top:696px;width:100px;text-align:center;font:14px/14px 'Liberation Sans',sans-serif;color:#f0f0f0">80</div>
<div class="a" style="left:1314.2px;top:606px;width:99.6px;height:38px;border:1.6px solid #f4f4f4;background:#e0e8d8"></div>
<div class="a" style="left:1314.2px;top:655px;width:99.6px;height:38px;border:1.6px solid #f4f4f4;background:#e5e5e5"></div>
<div class="t" style="left:1314.2px;top:696px;width:100px;text-align:center;font:14px/14px 'Liberation Sans',sans-serif;color:#f0f0f0">90</div>
<div class="a" style="left:1430.0px;top:606px;width:99.6px;height:38px;border:1.6px solid #f4f4f4;background:#f5fdee"></div>
<div class="a" style="left:1430.0px;top:655px;width:99.6px;height:38px;border:1.6px solid #f4f4f4;background:#fbfbfb"></div>
<div class="t" style="left:1430.0px;top:696px;width:100px;text-align:center;font:14px/14px 'Liberation Sans',sans-serif;color:#f0f0f0">100</div>
<div class="t" style="left:252px;top:619px;width:14px;height:14px;transform:rotate(-90deg);transform-origin:0 0;"></div>
<div class="t" style="left:252px;top:645px;transform:rotate(-90deg);transform-origin:0 0;font:14px/14px 'Liberation Sans',sans-serif;color:#eee">Actual</div>
<div class="t" style="left:252px;top:695px;transform:rotate(-90deg);transform-origin:0 0;font:14px/14px 'Liberation Sans',sans-serif;color:#eee">Target</div>
<div class="t" style="left:19px;top:733px;font:35.5px/40px 'Liberation Sans',sans-serif;color:#eee">Current Reading</div>
<div class="t" style="left:19px;top:783.5px;font:30px/32px 'Liberation Sans',sans-serif;color:#eee">x: 0,3171</div>
<div class="t" style="left:19px;top:826.5px;font:30px/32px 'Liberation Sans',sans-serif;color:#eee">y: 0,3474</div>
<div class="t" style="left:19px;top:869.5px;font:30px/32px 'Liberation Sans',sans-serif;color:#eee">fL: 215,342</div>
<div class="t" style="left:19px;top:912.5px;font:30px/32px 'Liberation Sans',sans-serif;color:#eee">cd/m&#178;: 737,819</div>
<div class="a" style="left:334px;top:731px;width:294px;height:231px;background:#333;border:7px solid #000"></div>
<div class="a" style="left:381px;top:741px;width:238px;height:185px;background:linear-gradient(90deg,#a0f8f8 0%,#d0fafa 30%,#ffffff 50%,#fde8e8 75%,#f8b4b8 100%);border:0"></div>
<div class="a" style="left:381px;top:741px;width:238px;height:185px;background:linear-gradient(90deg,#90f8c4 0%,#b4f8c4 35%,#e8f8c8 60%,#fafac8 78%,#f8dcb0 100%);-webkit-mask-image:linear-gradient(#000,transparent 55%)"></div>
<div class="a" style="left:381px;top:741px;width:238px;height:185px;background:linear-gradient(90deg,#a8c8f8 0%,#d4c8f8 35%,#f8c8f8 55%,#f8a8d8 80%,#f890c0 100%);-webkit-mask-image:linear-gradient(transparent 45%,#000)"></div>
<div class="a" style="left:381px;top:741px;width:238px;height:185px;border:1px solid #909090;border-left-color:#606060;border-right-color:#505050"></div>
<svg class="a" style="left:330px;top:725px" width="300" height="240" viewBox="330 725 300 240"><clipPath id="cc"><rect x="382" y="742" width="236" height="183"/></clipPath><path d="M411 925 Q 500 850 618 771" fill="none" stroke="#000" stroke-width="3" clip-path="url(#cc)"/><rect x="491.5" y="827" width="14" height="14" fill="#fff" stroke="#000" stroke-width="2.6"/><circle cx="515.5" cy="778.5" r="5.5" fill="#151515"/><circle cx="534.5" cy="741" r="5" fill="#555" stroke="#111" stroke-width="1" clip-path="url(#cc)"/><circle cx="534.5" cy="745" r="5" fill="#666" stroke="#111" stroke-width="1" clip-path="url(#cc)"/><circle cx="535" cy="752" r="5" fill="#777" stroke="#111" stroke-width="1" clip-path="url(#cc)"/><circle cx="531.5" cy="751" r="5" fill="#999" stroke="#111" stroke-width="1" clip-path="url(#cc)"/><circle cx="526.5" cy="757.5" r="5" fill="#aaa" stroke="#111" stroke-width="1" clip-path="url(#cc)"/><circle cx="525" cy="761.5" r="5" fill="#ccc" stroke="#111" stroke-width="1" clip-path="url(#cc)"/><circle cx="524" cy="764" r="5" fill="#ddd" stroke="#111" stroke-width="1" clip-path="url(#cc)"/><circle cx="519.5" cy="765.4" r="5" fill="#fff" stroke="#111" stroke-width="1" clip-path="url(#cc)"/><line x1="375" y1="757" x2="381" y2="757" stroke="#ccc" stroke-width="1.2"/><text x="374.5" y="763.5" font-size="16" fill="#ddd" text-anchor="end" font-family="Liberation Sans">0,35</text><line x1="375" y1="793.9" x2="381" y2="793.9" stroke="#ccc" stroke-width="1.2"/><text x="374.5" y="800.4" font-size="16" fill="#ddd" text-anchor="end" font-family="Liberation Sans">0,34</text><line x1="375" y1="830.1" x2="381" y2="830.1" stroke="#ccc" stroke-width="1.2"/><text x="374.5" y="836.6" font-size="16" fill="#ddd" text-anchor="end" font-family="Liberation Sans">0,33</text><line x1="375" y1="866.7" x2="381" y2="866.7" stroke="#ccc" stroke-width="1.2"/><text x="374.5" y="873.2" font-size="16" fill="#ddd" text-anchor="end" font-family="Liberation Sans">0,32</text><line x1="375" y1="903.1" x2="381" y2="903.1" stroke="#ccc" stroke-width="1.2"/><text x="374.5" y="909.6" font-size="16" fill="#ddd" text-anchor="end" font-family="Liberation Sans">0,31</text><line x1="391.1" y1="926" x2="391.1" y2="932" stroke="#ccc" stroke-width="2"/><text x="391.1" y="948" font-size="16" fill="#ddd" text-anchor="middle" font-family="Liberation Sans">0,29</text><line x1="438.9" y1="926" x2="438.9" y2="932" stroke="#ccc" stroke-width="2"/><text x="438.9" y="948" font-size="16" fill="#ddd" text-anchor="middle" font-family="Liberation Sans">0,3</text><line x1="485.6" y1="926" x2="485.6" y2="932" stroke="#ccc" stroke-width="2"/><text x="485.6" y="948" font-size="16" fill="#ddd" text-anchor="middle" font-family="Liberation Sans">0,31</text><line x1="533.5" y1="926" x2="533.5" y2="932" stroke="#ccc" stroke-width="2"/><text x="533.5" y="948" font-size="16" fill="#ddd" text-anchor="middle" font-family="Liberation Sans">0,32</text><line x1="581.4" y1="926" x2="581.4" y2="932" stroke="#ccc" stroke-width="2"/><text x="581.4" y="948" font-size="16" fill="#ddd" text-anchor="middle" font-family="Liberation Sans">0,33</text></svg>
<div class="a" style="left:630px;top:733px;width:1020px;height:28px;background:linear-gradient(#282828 0,#282828 13px,#181818 14px,#111 28px)"></div>
<div class="a" style="left:630px;top:733px;width:13px;height:28px;background:#000"></div>
<div class="t" style="left:767px;top:739px;font:17.5px/18px 'Liberation Sans',sans-serif;transform:scaleX(0.86);transform-origin:0 0;color:#eee">0</div>
<div class="t" style="left:855px;top:739px;font:17.5px/18px 'Liberation Sans',sans-serif;transform:scaleX(0.86);transform-origin:0 0;color:#eee">10</div>
<div class="t" style="left:935px;top:739px;font:17.5px/18px 'Liberation Sans',sans-serif;transform:scaleX(0.86);transform-origin:0 0;color:#eee">20</div>
<div class="t" style="left:1015px;top:739px;font:17.5px/18px 'Liberation Sans',sans-serif;transform:scaleX(0.86);transform-origin:0 0;color:#eee">30</div>
<div class="t" style="left:1095px;top:739px;font:17.5px/18px 'Liberation Sans',sans-serif;transform:scaleX(0.86);transform-origin:0 0;color:#eee">40</div>
<div class="t" style="left:1175px;top:739px;font:17.5px/18px 'Liberation Sans',sans-serif;transform:scaleX(0.86);transform-origin:0 0;color:#eee">50</div>
<div class="t" style="left:1255px;top:739px;font:17.5px/18px 'Liberation Sans',sans-serif;transform:scaleX(0.86);transform-origin:0 0;color:#eee">60</div>
<div class="t" style="left:1335px;top:739px;font:17.5px/18px 'Liberation Sans',sans-serif;transform:scaleX(0.86);transform-origin:0 0;color:#eee">70</div>
<div class="t" style="left:1415px;top:739px;font:17.5px/18px 'Liberation Sans',sans-serif;transform:scaleX(0.86);transform-origin:0 0;color:#eee">80</div>
<div class="t" style="left:1495px;top:739px;font:17.5px/18px 'Liberation Sans',sans-serif;transform:scaleX(0.86);transform-origin:0 0;color:#eee">90</div>
<div class="t" style="left:1575px;top:739px;font:17.5px/18px 'Liberation Sans',sans-serif;transform:scaleX(0.86);transform-origin:0 0;color:#eee">100</div>
<div class="a" style="left:643px;top:761.00px;width:1007px;height:23.65px;background:#3c3c3c"></div>
<div class="a" style="left:630px;top:761.00px;width:13px;height:23.65px;background:#262626;border-bottom:1px solid #1e1e1e"></div>
<div class="t" style="left:647px;top:764.00px;font:17.5px/18px 'Liberation Sans',sans-serif;transform:scaleX(0.86);transform-origin:0 0;color:#f0f0f0">x: CIE31</div>
<div class="t" style="left:767px;top:764.00px;font:17.5px/18px 'Liberation Sans',sans-serif;transform:scaleX(0.86);transform-origin:0 0;color:#f0f0f0">0,2677</div>
<div class="t" style="left:855px;top:764.00px;font:17.5px/18px 'Liberation Sans',sans-serif;transform:scaleX(0.86);transform-origin:0 0;color:#f0f0f0">0,3162</div>
<div class="t" style="left:935px;top:764.00px;font:17.5px/18px 'Liberation Sans',sans-serif;transform:scaleX(0.86);transform-origin:0 0;color:#f0f0f0">0,3194</div>
<div class="t" style="left:1015px;top:764.00px;font:17.5px/18px 'Liberation Sans',sans-serif;transform:scaleX(0.86);transform-origin:0 0;color:#f0f0f0">0,3201</div>
<div class="t" style="left:1095px;top:764.00px;font:17.5px/18px 'Liberation Sans',sans-serif;transform:scaleX(0.86);transform-origin:0 0;color:#f0f0f0">0,3200</div>
<div class="t" style="left:1175px;top:764.00px;font:17.5px/18px 'Liberation Sans',sans-serif;transform:scaleX(0.86);transform-origin:0 0;color:#f0f0f0">0,3198</div>
<div class="t" style="left:1255px;top:764.00px;font:17.5px/18px 'Liberation Sans',sans-serif;transform:scaleX(0.86);transform-origin:0 0;color:#f0f0f0">0,3195</div>
<div class="t" style="left:1335px;top:764.00px;font:17.5px/18px 'Liberation Sans',sans-serif;transform:scaleX(0.86);transform-origin:0 0;color:#f0f0f0">0,3183</div>
<div class="t" style="left:1415px;top:764.00px;font:17.5px/18px 'Liberation Sans',sans-serif;transform:scaleX(0.86);transform-origin:0 0;color:#f0f0f0">0,3180</div>
<div class="t" style="left:1495px;top:764.00px;font:17.5px/18px 'Liberation Sans',sans-serif;transform:scaleX(0.86);transform-origin:0 0;color:#f0f0f0">0,3179</div>
<div class="t" style="left:1575px;top:764.00px;font:17.5px/18px 'Liberation Sans',sans-serif;transform:scaleX(0.86);transform-origin:0 0;color:#f0f0f0">0,3171</div>
<div class="a" style="left:643px;top:784.55px;width:1007px;height:23.65px;background:#808080"></div>
<div class="a" style="left:630px;top:784.55px;width:13px;height:23.65px;background:#262626;border-bottom:1px solid #1e1e1e"></div>
<div class="t" style="left:647px;top:787.55px;font:17.5px/18px 'Liberation Sans',sans-serif;transform:scaleX(0.86);transform-origin:0 0;color:#f0f0f0">y: CIE31</div>
<div class="t" style="left:767px;top:787.55px;font:17.5px/18px 'Liberation Sans',sans-serif;transform:scaleX(0.86);transform-origin:0 0;color:#f0f0f0">0,2566</div>
<div class="t" style="left:855px;top:787.55px;font:17.5px/18px 'Liberation Sans',sans-serif;transform:scaleX(0.86);transform-origin:0 0;color:#f0f0f0">0,3438</div>
<div class="t" style="left:935px;top:787.55px;font:17.5px/18px 'Liberation Sans',sans-serif;transform:scaleX(0.86);transform-origin:0 0;color:#f0f0f0">0,3512</div>
<div class="t" style="left:1015px;top:787.55px;font:17.5px/18px 'Liberation Sans',sans-serif;transform:scaleX(0.86);transform-origin:0 0;color:#f0f0f0">0,3532</div>
<div class="t" style="left:1095px;top:787.55px;font:17.5px/18px 'Liberation Sans',sans-serif;transform:scaleX(0.86);transform-origin:0 0;color:#f0f0f0">0,3513</div>
<div class="t" style="left:1175px;top:787.55px;font:17.5px/18px 'Liberation Sans',sans-serif;transform:scaleX(0.86);transform-origin:0 0;color:#f0f0f0">0,3515</div>
<div class="t" style="left:1255px;top:787.55px;font:17.5px/18px 'Liberation Sans',sans-serif;transform:scaleX(0.86);transform-origin:0 0;color:#f0f0f0">0,3511</div>
<div class="t" style="left:1335px;top:787.55px;font:17.5px/18px 'Liberation Sans',sans-serif;transform:scaleX(0.86);transform-origin:0 0;color:#f0f0f0">0,3492</div>
<div class="t" style="left:1415px;top:787.55px;font:17.5px/18px 'Liberation Sans',sans-serif;transform:scaleX(0.86);transform-origin:0 0;color:#f0f0f0">0,3476</div>
<div class="t" style="left:1495px;top:787.55px;font:17.5px/18px 'Liberation Sans',sans-serif;transform:scaleX(0.86);transform-origin:0 0;color:#f0f0f0">0,3472</div>
<div class="t" style="left:1575px;top:787.55px;font:17.5px/18px 'Liberation Sans',sans-serif;transform:scaleX(0.86);transform-origin:0 0;color:#f0f0f0">0,3474</div>
<div class="a" style="left:643px;top:808.10px;width:1007px;height:23.65px;background:#3c3c3c"></div>
<div class="a" style="left:630px;top:808.10px;width:13px;height:23.65px;background:#262626;border-bottom:1px solid #1e1e1e"></div>
<div class="t" style="left:647px;top:811.10px;font:17.5px/18px 'Liberation Sans',sans-serif;transform:scaleX(0.86);transform-origin:0 0;color:#f0f0f0">Y</div>
<div class="t" style="left:767px;top:811.10px;font:17.5px/18px 'Liberation Sans',sans-serif;transform:scaleX(0.86);transform-origin:0 0;color:#f0f0f0">0,6223</div>
<div class="t" style="left:855px;top:811.10px;font:17.5px/18px 'Liberation Sans',sans-serif;transform:scaleX(0.86);transform-origin:0 0;color:#f0f0f0">7,7985</div>
<div class="t" style="left:935px;top:811.10px;font:17.5px/18px 'Liberation Sans',sans-serif;transform:scaleX(0.86);transform-origin:0 0;color:#f0f0f0">23,9869</div>
<div class="t" style="left:1015px;top:811.10px;font:17.5px/18px 'Liberation Sans',sans-serif;transform:scaleX(0.86);transform-origin:0 0;color:#f0f0f0">54,3176</div>
<div class="t" style="left:1095px;top:811.10px;font:17.5px/18px 'Liberation Sans',sans-serif;transform:scaleX(0.86);transform-origin:0 0;color:#f0f0f0">100,6502</div>
<div class="t" style="left:1175px;top:811.10px;font:17.5px/18px 'Liberation Sans',sans-serif;transform:scaleX(0.86);transform-origin:0 0;color:#f0f0f0">166,1659</div>
<div class="t" style="left:1255px;top:811.10px;font:17.5px/18px 'Liberation Sans',sans-serif;transform:scaleX(0.86);transform-origin:0 0;color:#f0f0f0">235,2956</div>
<div class="t" style="left:1335px;top:811.10px;font:17.5px/18px 'Liberation Sans',sans-serif;transform:scaleX(0.86);transform-origin:0 0;color:#f0f0f0">330,8925</div>
<div class="t" style="left:1415px;top:811.10px;font:17.5px/18px 'Liberation Sans',sans-serif;transform:scaleX(0.86);transform-origin:0 0;color:#f0f0f0">443,6291</div>
<div class="t" style="left:1495px;top:811.10px;font:17.5px/18px 'Liberation Sans',sans-serif;transform:scaleX(0.86);transform-origin:0 0;color:#f0f0f0">579,2401</div>
<div class="t" style="left:1575px;top:811.10px;font:17.5px/18px 'Liberation Sans',sans-serif;transform:scaleX(0.86);transform-origin:0 0;color:#f0f0f0">737,8185</div>
<div class="a" style="left:643px;top:831.65px;width:1007px;height:23.65px;background:#808080"></div>
<div class="a" style="left:630px;top:831.65px;width:13px;height:23.65px;background:#262626;border-bottom:1px solid #1e1e1e"></div>
<div class="t" style="left:647px;top:834.65px;font:17.5px/18px 'Liberation Sans',sans-serif;transform:scaleX(0.86);transform-origin:0 0;color:#f0f0f0">Target Y</div>
<div class="t" style="left:767px;top:834.65px;font:17.5px/18px 'Liberation Sans',sans-serif;transform:scaleX(0.86);transform-origin:0 0;color:#f0f0f0">0,0000</div>
<div class="t" style="left:855px;top:834.65px;font:17.5px/18px 'Liberation Sans',sans-serif;transform:scaleX(0.86);transform-origin:0 0;color:#f0f0f0">7,6215</div>
<div class="t" style="left:935px;top:834.65px;font:17.5px/18px 'Liberation Sans',sans-serif;transform:scaleX(0.86);transform-origin:0 0;color:#f0f0f0">24,4253</div>
<div class="t" style="left:1015px;top:834.65px;font:17.5px/18px 'Liberation Sans',sans-serif;transform:scaleX(0.86);transform-origin:0 0;color:#f0f0f0">53,3235</div>
<div class="t" style="left:1095px;top:834.65px;font:17.5px/18px 'Liberation Sans',sans-serif;transform:scaleX(0.86);transform-origin:0 0;color:#f0f0f0">98,0327</div>
<div class="t" style="left:1175px;top:834.65px;font:17.5px/18px 'Liberation Sans',sans-serif;transform:scaleX(0.86);transform-origin:0 0;color:#f0f0f0">159,2659</div>
<div class="t" style="left:1255px;top:834.65px;font:17.5px/18px 'Liberation Sans',sans-serif;transform:scaleX(0.86);transform-origin:0 0;color:#f0f0f0">235,0297</div>
<div class="t" style="left:1335px;top:834.65px;font:17.5px/18px 'Liberation Sans',sans-serif;transform:scaleX(0.86);transform-origin:0 0;color:#f0f0f0">328,4777</div>
<div class="t" style="left:1415px;top:834.65px;font:17.5px/18px 'Liberation Sans',sans-serif;transform:scaleX(0.86);transform-origin:0 0;color:#f0f0f0">445,5150</div>
<div class="t" style="left:1495px;top:834.65px;font:17.5px/18px 'Liberation Sans',sans-serif;transform:scaleX(0.86);transform-origin:0 0;color:#f0f0f0">583,8343</div>
<div class="t" style="left:1575px;top:834.65px;font:17.5px/18px 'Liberation Sans',sans-serif;transform:scaleX(0.86);transform-origin:0 0;color:#f0f0f0">737,8185</div>
<div class="a" style="left:643px;top:855.20px;width:1007px;height:23.65px;background:#3c3c3c"></div>
<div class="a" style="left:630px;top:855.20px;width:13px;height:23.65px;background:#262626;border-bottom:1px solid #1e1e1e"></div>
<div class="t" style="left:647px;top:858.20px;font:17.5px/18px 'Liberation Sans',sans-serif;transform:scaleX(0.86);transform-origin:0 0;color:#f0f0f0">Gamma Log/Log</div>
<div class="t" style="left:767px;top:858.20px;font:17.5px/18px 'Liberation Sans',sans-serif;transform:scaleX(0.86);transform-origin:0 0;color:#f0f0f0">1,3704</div>
<div class="t" style="left:855px;top:858.20px;font:17.5px/18px 'Liberation Sans',sans-serif;transform:scaleX(0.86);transform-origin:0 0;color:#f0f0f0">1,9927</div>
<div class="t" style="left:935px;top:858.20px;font:17.5px/18px 'Liberation Sans',sans-serif;transform:scaleX(0.86);transform-origin:0 0;color:#f0f0f0">2,1288</div>
<div class="t" style="left:1015px;top:858.20px;font:17.5px/18px 'Liberation Sans',sans-serif;transform:scaleX(0.86);transform-origin:0 0;color:#f0f0f0">2,1551</div>
<div class="t" style="left:1095px;top:858.20px;font:17.5px/18px 'Liberation Sans',sans-serif;transform:scaleX(0.86);transform-origin:0 0;color:#f0f0f0">2,1740</div>
<div class="t" style="left:1175px;top:858.20px;font:17.5px/18px 'Liberation Sans',sans-serif;transform:scaleX(0.86);transform-origin:0 0;color:#f0f0f0">2,1629</div>
<div class="t" style="left:1255px;top:858.20px;font:17.5px/18px 'Liberation Sans',sans-serif;transform:scaleX(0.86);transform-origin:0 0;color:#f0f0f0">2,2373</div>
<div class="t" style="left:1335px;top:858.20px;font:17.5px/18px 'Liberation Sans',sans-serif;transform:scaleX(0.86);transform-origin:0 0;color:#f0f0f0">2,2307</div>
<div class="t" style="left:1415px;top:858.20px;font:17.5px/18px 'Liberation Sans',sans-serif;transform:scaleX(0.86);transform-origin:0 0;color:#f0f0f0">2,2797</div>
<div class="t" style="left:1495px;top:858.20px;font:17.5px/18px 'Liberation Sans',sans-serif;transform:scaleX(0.86);transform-origin:0 0;color:#f0f0f0">2,3451</div>
<div class="t" style="left:1575px;top:858.20px;font:17.5px/18px 'Liberation Sans',sans-serif;transform:scaleX(0.86);transform-origin:0 0;color:#f0f0f0">2,2748</div>
<div class="a" style="left:643px;top:878.75px;width:1007px;height:23.65px;background:#808080"></div>
<div class="a" style="left:630px;top:878.75px;width:13px;height:23.65px;background:#262626;border-bottom:1px solid #1e1e1e"></div>
<div class="t" style="left:647px;top:881.75px;font:17.5px/18px 'Liberation Sans',sans-serif;transform:scaleX(0.86);transform-origin:0 0;color:#f0f0f0">CCT</div>
<div class="t" style="left:767px;top:881.75px;font:17.5px/18px 'Liberation Sans',sans-serif;transform:scaleX(0.86);transform-origin:0 0;color:#f0f0f0">15029,9032</div>
<div class="t" style="left:855px;top:881.75px;font:17.5px/18px 'Liberation Sans',sans-serif;transform:scaleX(0.86);transform-origin:0 0;color:#f0f0f0">6234,8174</div>
<div class="t" style="left:935px;top:881.75px;font:17.5px/18px 'Liberation Sans',sans-serif;transform:scaleX(0.86);transform-origin:0 0;color:#f0f0f0">6056,8011</div>
<div class="t" style="left:1015px;top:881.75px;font:17.5px/18px 'Liberation Sans',sans-serif;transform:scaleX(0.86);transform-origin:0 0;color:#f0f0f0">6022,7328</div>
<div class="t" style="left:1095px;top:881.75px;font:17.5px/18px 'Liberation Sans',sans-serif;transform:scaleX(0.86);transform-origin:0 0;color:#f0f0f0">6029,4558</div>
<div class="t" style="left:1175px;top:881.75px;font:17.5px/18px 'Liberation Sans',sans-serif;transform:scaleX(0.86);transform-origin:0 0;color:#f0f0f0">6040,1540</div>
<div class="t" style="left:1255px;top:881.75px;font:17.5px/18px 'Liberation Sans',sans-serif;transform:scaleX(0.86);transform-origin:0 0;color:#f0f0f0">6054,6649</div>
<div class="t" style="left:1335px;top:881.75px;font:17.5px/18px 'Liberation Sans',sans-serif;transform:scaleX(0.86);transform-origin:0 0;color:#f0f0f0">6114,4107</div>
<div class="t" style="left:1415px;top:881.75px;font:17.5px/18px 'Liberation Sans',sans-serif;transform:scaleX(0.86);transform-origin:0 0;color:#f0f0f0">6134,0398</div>
<div class="t" style="left:1495px;top:881.75px;font:17.5px/18px 'Liberation Sans',sans-serif;transform:scaleX(0.86);transform-origin:0 0;color:#f0f0f0">6142,3588</div>
<div class="t" style="left:1575px;top:881.75px;font:17.5px/18px 'Liberation Sans',sans-serif;transform:scaleX(0.86);transform-origin:0 0;color:#f0f0f0">6179,8676</div>
<div class="a" style="left:643px;top:902.30px;width:1007px;height:23.65px;background:#3c3c3c"></div>
<div class="a" style="left:630px;top:902.30px;width:13px;height:23.65px;background:#262626;border-bottom:1px solid #1e1e1e"></div>
<div class="t" style="left:647px;top:905.30px;font:17.5px/18px 'Liberation Sans',sans-serif;transform:scaleX(0.86);transform-origin:0 0;color:#f0f0f0">&#916;E 2000</div>
<div class="t" style="left:767px;top:905.30px;font:17.5px/18px 'Liberation Sans',sans-serif;transform:scaleX(0.86);transform-origin:0 0;color:#f0f0f0">1,1072</div>
<div class="t" style="left:855px;top:905.30px;font:17.5px/18px 'Liberation Sans',sans-serif;transform:scaleX(0.86);transform-origin:0 0;color:#f0f0f0">2,1518</div>
<div class="t" style="left:935px;top:905.30px;font:17.5px/18px 'Liberation Sans',sans-serif;transform:scaleX(0.86);transform-origin:0 0;color:#f0f0f0">4,2182</div>
<div class="t" style="left:1015px;top:905.30px;font:17.5px/18px 'Liberation Sans',sans-serif;transform:scaleX(0.86);transform-origin:0 0;color:#f0f0f0">5,8009</div>
<div class="t" style="left:1095px;top:905.30px;font:17.5px/18px 'Liberation Sans',sans-serif;transform:scaleX(0.86);transform-origin:0 0;color:#f0f0f0">6,3776</div>
<div class="t" style="left:1175px;top:905.30px;font:17.5px/18px 'Liberation Sans',sans-serif;transform:scaleX(0.86);transform-origin:0 0;color:#f0f0f0">7,5062</div>
<div class="t" style="left:1255px;top:905.30px;font:17.5px/18px 'Liberation Sans',sans-serif;transform:scaleX(0.86);transform-origin:0 0;color:#f0f0f0">8,0871</div>
<div class="t" style="left:1335px;top:905.30px;font:17.5px/18px 'Liberation Sans',sans-serif;transform:scaleX(0.86);transform-origin:0 0;color:#f0f0f0">8,4326</div>
<div class="t" style="left:1415px;top:905.30px;font:17.5px/18px 'Liberation Sans',sans-serif;transform:scaleX(0.86);transform-origin:0 0;color:#f0f0f0">8,4905</div>
<div class="t" style="left:1495px;top:905.30px;font:17.5px/18px 'Liberation Sans',sans-serif;transform:scaleX(0.86);transform-origin:0 0;color:#f0f0f0">8,9871</div>
<div class="t" style="left:1575px;top:905.30px;font:17.5px/18px 'Liberation Sans',sans-serif;transform:scaleX(0.86);transform-origin:0 0;color:#f0f0f0">9,9010</div>
<div class="a" style="left:4px;top:961px;width:1680px;height:63px;background:#2a2a2a"></div>
<div class="a" style="left:5.0px;top:962px;width:121.5px;height:61px;border-radius:4px;background:linear-gradient(#a8a8a8,#8a8a8a 30%,#6c6c6c 65%,#585858)"></div>
<div class="a" style="left:9.5px;top:966.5px;width:112.5px;height:37px;border-radius:4px;border:1px solid #bbb;background:#000"></div>
<div class="t" style="left:5.0px;top:1008px;width:121.5px;text-align:center;font:13.5px/13px 'Liberation Sans',sans-serif;color:#3a3a3a">0</div>
<div class="a" style="left:128.2px;top:962px;width:121.5px;height:61px;border-radius:4px;background:linear-gradient(#a8a8a8,#8a8a8a 30%,#6c6c6c 65%,#585858)"></div>
<div class="a" style="left:132.8px;top:966.5px;width:112.5px;height:37px;border-radius:4px;border:1px solid #bbb;background:#1c1c1c"></div>
<div class="t" style="left:128.2px;top:1008px;width:121.5px;text-align:center;font:13.5px/13px 'Liberation Sans',sans-serif;color:#3a3a3a">10</div>
<div class="a" style="left:251.5px;top:962px;width:121.5px;height:61px;border-radius:4px;background:linear-gradient(#a8a8a8,#8a8a8a 30%,#6c6c6c 65%,#585858)"></div>
<div class="a" style="left:256.0px;top:966.5px;width:112.5px;height:37px;border-radius:4px;border:1px solid #bbb;background:#333"></div>
<div class="t" style="left:251.5px;top:1008px;width:121.5px;text-align:center;font:13.5px/13px 'Liberation Sans',sans-serif;color:#3a3a3a">20</div>
<div class="a" style="left:374.8px;top:962px;width:121.5px;height:61px;border-radius:4px;background:linear-gradient(#a8a8a8,#8a8a8a 30%,#6c6c6c 65%,#585858)"></div>
<div class="a" style="left:379.2px;top:966.5px;width:112.5px;height:37px;border-radius:4px;border:1px solid #bbb;background:#4e4e4e"></div>
<div class="t" style="left:374.8px;top:1008px;width:121.5px;text-align:center;font:13.5px/13px 'Liberation Sans',sans-serif;color:#3a3a3a">30</div>
<div class="a" style="left:498.0px;top:962px;width:121.5px;height:61px;border-radius:4px;background:linear-gradient(#a8a8a8,#8a8a8a 30%,#6c6c6c 65%,#585858)"></div>
<div class="a" style="left:502.5px;top:966.5px;width:112.5px;height:37px;border-radius:4px;border:1px solid #bbb;background:#696969"></div>
<div class="t" style="left:498.0px;top:1008px;width:121.5px;text-align:center;font:13.5px/13px 'Liberation Sans',sans-serif;color:#3a3a3a">40</div>
<div class="a" style="left:621.2px;top:962px;width:121.5px;height:61px;border-radius:4px;background:linear-gradient(#a8a8a8,#8a8a8a 30%,#6c6c6c 65%,#585858)"></div>
<div class="a" style="left:625.8px;top:966.5px;width:112.5px;height:37px;border-radius:4px;border:1px solid #bbb;background:#848484"></div>
<div class="t" style="left:621.2px;top:1008px;width:121.5px;text-align:center;font:13.5px/13px 'Liberation Sans',sans-serif;color:#3a3a3a">50</div>
<div class="a" style="left:744.5px;top:962px;width:121.5px;height:61px;border-radius:4px;background:linear-gradient(#a8a8a8,#8a8a8a 30%,#6c6c6c 65%,#585858)"></div>
<div class="a" style="left:749.0px;top:966.5px;width:112.5px;height:37px;border-radius:4px;border:1px solid #bbb;background:#9e9e9e"></div>
<div class="t" style="left:744.5px;top:1008px;width:121.5px;text-align:center;font:13.5px/13px 'Liberation Sans',sans-serif;color:#3a3a3a">60</div>
<div class="a" style="left:867.8px;top:962px;width:121.5px;height:61px;border-radius:4px;background:linear-gradient(#a8a8a8,#8a8a8a 30%,#6c6c6c 65%,#585858)"></div>
<div class="a" style="left:872.2px;top:966.5px;width:112.5px;height:37px;border-radius:4px;border:1px solid #bbb;background:#b3b3b3"></div>
<div class="t" style="left:867.8px;top:1008px;width:121.5px;text-align:center;font:13.5px/13px 'Liberation Sans',sans-serif;color:#3a3a3a">70</div>
<div class="a" style="left:991.0px;top:962px;width:121.5px;height:61px;border-radius:4px;background:linear-gradient(#a8a8a8,#8a8a8a 30%,#6c6c6c 65%,#585858)"></div>
<div class="a" style="left:995.5px;top:966.5px;width:112.5px;height:37px;border-radius:4px;border:1px solid #bbb;background:#cbcbcb"></div>
<div class="t" style="left:991.0px;top:1008px;width:121.5px;text-align:center;font:13.5px/13px 'Liberation Sans',sans-serif;color:#3a3a3a">80</div>
<div class="a" style="left:1114.2px;top:962px;width:121.5px;height:61px;border-radius:4px;background:linear-gradient(#a8a8a8,#8a8a8a 30%,#6c6c6c 65%,#585858)"></div>
<div class="a" style="left:1118.8px;top:966.5px;width:112.5px;height:37px;border-radius:4px;border:1px solid #bbb;background:#e5e5e5"></div>
<div class="t" style="left:1114.2px;top:1008px;width:121.5px;text-align:center;font:13.5px/13px 'Liberation Sans',sans-serif;color:#3a3a3a">90</div>
<div class="a" style="left:1237.5px;top:962px;width:121.5px;height:61px;border-radius:4px;background:linear-gradient(#5a5a5a,#454545 60%,#3a3a3a)"></div>
<div class="a" style="left:1242.0px;top:966.5px;width:112.5px;height:37px;border-radius:4px;border:1px solid #bbb;background:#fff"></div>
<div class="t" style="left:1237.5px;top:1008px;width:121.5px;text-align:center;font:bold 13.5px/13px 'Liberation Sans',sans-serif;color:#e0e0e0">100</div>
<div class="a" style="left:1361px;top:962px;width:48px;height:61px;border-radius:4px;background:linear-gradient(#9a9a9a,#707070 29%,#2a2a2a 29%,#2a2a2a 31%,#9a9a9a 31%,#7a7a7a 70%,#5a5a5a)"></div>
<div class="a" style="left:1375px;top:964px;width:20px;height:15px;border-radius:50%;background:radial-gradient(circle at 50% 30%,#666,#999)"></div>
<svg class="a" style="left:1378px;top:967px" width="14" height="8"><path d="M7 1L13 7L1 7Z" fill="#333"/></svg>
<div class="a" style="left:1368px;top:986px;width:33px;height:33px;border-radius:4px;border:3px solid #222;background:linear-gradient(#aaa,#999 50%,#888 50%,#777)"></div>
<div class="a" style="left:1377px;top:995px;width:15px;height:15px;background:linear-gradient(#222 50%,#000 50%)"></div>
<div class="a" style="left:1410px;top:962px;width:45px;height:30px;border-radius:4px 0 0 0;background:linear-gradient(#a8a8a8,#8a8a8a 50%,#666)"></div>
<div class="a" style="left:1422px;top:966px;width:21px;height:21px;border-radius:50%;background:radial-gradient(circle at 50% 30%,#666,#8a8a8a 60%,#aaa)"></div>
<div class="a" style="left:1456.5px;top:962px;width:45px;height:30px;border-radius:0;background:linear-gradient(#a8a8a8,#8a8a8a 50%,#666)"></div>
<div class="a" style="left:1468.5px;top:966px;width:21px;height:21px;border-radius:50%;background:radial-gradient(circle at 50% 30%,#666,#8a8a8a 60%,#aaa)"></div>
<div class="a" style="left:1501.5px;top:962px;width:45px;height:30px;border-radius:0;background:linear-gradient(#a8a8a8,#8a8a8a 50%,#666)"></div>
<div class="a" style="left:1513.5px;top:966px;width:21px;height:21px;border-radius:50%;background:radial-gradient(circle at 50% 30%,#666,#8a8a8a 60%,#aaa)"></div>
<div class="a" style="left:1546.5px;top:962px;width:45px;height:30px;border-radius:0;background:linear-gradient(#a8a8a8,#8a8a8a 50%,#666)"></div>
<div class="a" style="left:1558.5px;top:966px;width:21px;height:21px;border-radius:50%;background:radial-gradient(circle at 50% 30%,#666,#8a8a8a 60%,#aaa)"></div>
<div class="a" style="left:1591.5px;top:962px;width:45px;height:30px;border-radius:0;background:linear-gradient(#a8a8a8,#8a8a8a 50%,#666)"></div>
<div class="a" style="left:1603.5px;top:966px;width:21px;height:21px;border-radius:50%;background:radial-gradient(circle at 50% 30%,#666,#8a8a8a 60%,#aaa)"></div>
<div class="a" style="left:1636px;top:962px;width:47px;height:30px;border-radius:0 4px 0 0;background:#303030"></div>
<div class="a" style="left:1649px;top:966px;width:21px;height:21px;border-radius:50%;background:#262626"></div>
<div class="a" style="left:1456px;top:962px;width:1px;height:30px;background:#3a3a3a"></div>
<div class="a" style="left:1501px;top:962px;width:1px;height:30px;background:#3a3a3a"></div>
<div class="a" style="left:1546px;top:962px;width:1px;height:30px;background:#3a3a3a"></div>
<div class="a" style="left:1591px;top:962px;width:1px;height:30px;background:#3a3a3a"></div>
<div class="a" style="left:1428px;top:972px;width:9px;height:9px;background:#333"></div>
<svg class="a" style="left:1474px;top:970px" width="11" height="13"><path d="M1 1L10 6.5L1 12Z" fill="#333"/></svg>
<svg class="a" style="left:1517px;top:971px" width="14" height="12"><path d="M4 1.2H1.5V10.8H4M10 1.2H12.5V10.8H10" fill="none" stroke="#333" stroke-width="2"/><rect x="5.3" y="5.2" width="1.4" height="1.6" fill="#333"/><rect x="7.3" y="5.2" width="1.4" height="1.6" fill="#333"/></svg>
<svg class="a" style="left:1561.5px;top:972.5px" width="16" height="9"><path d="M8 4.5C6 1.5 2.5 1 1.7 4.5C2.5 8 6 7.5 8 4.5C10 1.5 13.5 1 14.3 4.5C13.5 8 10 7.5 8 4.5Z" fill="none" stroke="#333" stroke-width="1.9"/></svg>
<svg class="a" style="left:1606.5px;top:970px" width="13" height="14"><path d="M2.5 7A4.3 4.3 0 0 1 9.8 3.6M10.5 7A4.3 4.3 0 0 1 3.2 10.4" fill="none" stroke="#333" stroke-width="2.2"/><path d="M8.2 0.8L12 2.2L9.8 5.8Z M4.8 13.2L1 11.8L3.2 8.2Z" fill="#333"/></svg>
<div class="a" style="left:1410px;top:993px;width:135.5px;height:30px;border-radius:4px 0 0 4px;background:linear-gradient(#a8a8a8,#8a8a8a 50%,#646464)"></div>
<div class="a" style="left:1546.5px;top:993px;width:136.5px;height:30px;border-radius:0 4px 4px 0;background:linear-gradient(#a8a8a8,#8a8a8a 50%,#646464)"></div>
<div class="a" style="left:1431px;top:997px;width:20px;height:20px;border-radius:50%;background:radial-gradient(circle at 50% 30%,#666,#8a8a8a 60%,#aaa)"></div>
<div class="a" style="left:1644px;top:997px;width:20px;height:20px;border-radius:50%;background:radial-gradient(circle at 50% 30%,#666,#8a8a8a 60%,#aaa)"></div>
<svg class="a" style="left:1435px;top:1001px" width="12" height="12"><path d="M6 1L1.5 6L6 11M10.5 1L6 6L10.5 11" fill="none" stroke="#333" stroke-width="1.8"/></svg>
<svg class="a" style="left:1648px;top:1001px" width="12" height="12"><path d="M6 1L10.5 6L6 11M1.5 1L6 6L1.5 11" fill="none" stroke="#333" stroke-width="1.8"/></svg>
<div class="t" style="left:1467px;top:996px;font:bold 22px/24px 'Liberation Sans',sans-serif;color:#2e2e2e">Back</div>
<div class="t" style="left:1574px;top:996px;font:bold 22px/24px 'Liberation Sans',sans-serif;color:#2e2e2e;letter-spacing:1px">Next</div>
</body></html>
